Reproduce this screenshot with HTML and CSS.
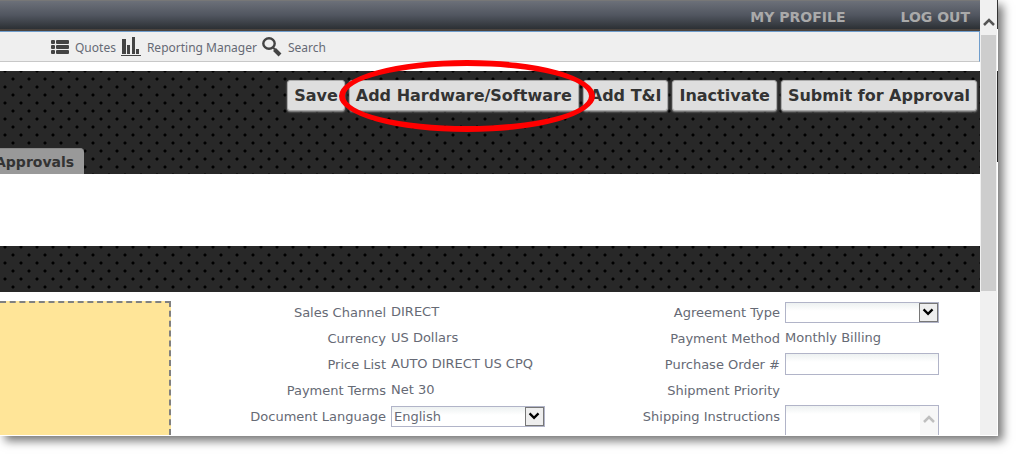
FILE: index.html
```
<!DOCTYPE html>
<html lang="en">
<head>
  <meta charset="utf-8">
  <title>Quote</title>
  <link rel="stylesheet" href="styles.css">
</head>
<body>
<div class="window">
  <div class="page">
    <div class="topbar">
      <a href="#">MY PROFILE</a>
      <a href="#">LOG OUT</a>
    </div>
    <nav class="toolbar">
      <a href="#">
        <svg width="18" height="14" viewBox="0 0 18 14" fill="#444">
          <rect x="0" y="0" width="4" height="4" rx="1"/><rect x="5" y="0" width="13" height="4" rx="1"/>
          <rect x="0" y="5" width="4" height="4" rx="1"/><rect x="5" y="5" width="13" height="4" rx="1"/>
          <rect x="0" y="10" width="4" height="4" rx="1"/><rect x="5" y="10" width="13" height="4" rx="1"/>
        </svg>
        <span>Quotes</span>
      </a>
      <a href="#">
        <svg width="20" height="20" viewBox="0 0 20 20" fill="#444">
          <rect x="1" y="2" width="4" height="15"/><rect x="6" y="8" width="3" height="9"/>
          <rect x="11" y="0" width="3" height="17"/><rect x="15" y="12" width="3" height="5"/>
          <rect x="0" y="18" width="20" height="1"/>
        </svg>
        <span>Reporting Manager</span>
      </a>
      <a href="#">
        <svg width="20" height="20" viewBox="0 0 20 20" fill="none" stroke="#444">
          <ellipse cx="7" cy="6.5" rx="5.7" ry="5.2" stroke-width="2.4"/>
          <path d="M11 10.500l2 2" stroke-width="2"/>
          <path d="M12.500 12.500l5.500 5.500" stroke-width="4"/>
        </svg>
        <span>Search</span>
      </a>
    </nav>
    <div class="band band-actions">
      <div class="actions">
        <button>Save</button>
        <div class="marked">
          <button>Add Hardware/Software</button>
          <div class="ring"></div>
        </div>
        <button>Add T&amp;I</button>
        <button>Inactivate</button>
        <button>Submit for Approval</button>
      </div>
      <a class="tab" href="#">Approvals</a>
    </div>
    <div class="band band-section"></div>
    <main class="details">
      <div class="note"></div>
      <div class="fields">
        <span class="name">Sales Channel</span><span class="value">DIRECT</span>
        <span class="name">Currency</span><span class="value">US Dollars</span>
        <span class="name">Price List</span><span class="value">AUTO DIRECT US CPQ</span>
        <span class="name">Payment Terms</span><span class="value">Net 30</span>
        <label class="name" for="language">Document Language</label>
        <div class="select">
          <select id="language"><option>English</option></select>
          <svg width="19" height="19" viewBox="0 0 19 19"><path d="M4 6l5 5 5-5" fill="none" stroke="#000" stroke-width="2.500"/></svg>
        </div>
      </div>
      <div class="fields">
        <label class="name" for="agreement">Agreement Type</label>
        <div class="select">
          <select id="agreement"><option></option></select>
          <svg width="19" height="19" viewBox="0 0 19 19"><path d="M4 6l5 5 5-5" fill="none" stroke="#000" stroke-width="2.500"/></svg>
        </div>
        <span class="name">Payment Method</span><span class="value">Monthly Billing</span>
        <label class="name" for="po">Purchase Order #</label>
        <input id="po" type="text">
        <span class="name">Shipment Priority</span><span class="value"></span>
        <label class="name" for="shipping">Shipping Instructions</label>
        <div class="memo">
          <textarea id="shipping"></textarea>
          <div class="memo-scroll">
            <svg width="12" height="10" viewBox="0 0 12 10"><path d="M1 8l5-5 5 5" fill="none" stroke="#bfbfbf" stroke-width="2.500"/></svg>
          </div>
        </div>
      </div>
    </main>
  </div>
  <div class="scrollbar">
    <button class="scroll-up" aria-label="Scroll up">
      <svg width="12" height="10" viewBox="0 0 12 10"><path d="M1 8l5-5 5 5" fill="none" stroke="#555" stroke-width="2.500"/></svg>
    </button>
    <div class="thumb"></div>
  </div>
</div>
</body>
</html>
```
FILE: styles.css
```
* {
  box-sizing: border-box;
}
body {
  margin: 0;
  height: 100vh;
  padding: 0 19px 19px 0;
  overflow: hidden;
  background: #fff;
  color: #666a75;
  font: 13px/16px Verdana, "DejaVu Sans", sans-serif;
}
a {
  color: inherit;
  text-decoration: none;
}
svg {
  display: block;
  flex: none;
}

.window {
  display: flex;
  height: 100%;
  padding-right: 1px;
  padding-bottom: 1px;
  background: linear-gradient(#333 29px, #fff 29px, #fff 71px, #282828 71px, #282828 162px, #fff 162px);
  box-shadow: 5px 5px 9px 0 #777;
}
.page {
  flex: 1;
  display: flex;
  flex-direction: column;
  min-width: 0;
  background: #fff;
}

.topbar {
  display: flex;
  flex: none;
  justify-content: flex-end;
  align-items: center;
  gap: 55px;
  height: 31px;
  padding: 4px 10px 0 0;
  border-top: 1px solid #777;
  border-bottom: 2px solid #4b443f;
  background: linear-gradient(#6c7079, #515660 50%, #2c3034);
  color: #aaa;
  font-size: 14px;
  font-weight: bold;
}

.toolbar {
  display: flex;
  flex: none;
  align-items: center;
  gap: 5px;
  height: 31px;
  margin-bottom: 9px;
  padding-left: 51px;
  border-top: 1px solid #6f9dcc;
  border-right: 1px solid #6f9dcc;
  border-bottom: 1px solid #c8c8c8;
  background: #efefef;
  font-family: "Noto Sans", sans-serif;
  font-size: 12px;
}
.toolbar a {
  display: flex;
  align-items: center;
  gap: 6px;
}
.toolbar span {
  padding-top: 3px;
}

/* dark perforated strip, two dots per 16px tile */
.band {
  flex: none;
  background-color: #282828;
  background-image:
    radial-gradient(circle at 5px 8px, #000 1px, transparent 2px),
    radial-gradient(circle at 13px 8px, #000 1px, transparent 2px);
  background-size: 16px 16px;
  background-position: 0 -8px, 0 0;
}
.band-actions {
  display: flex;
  flex-direction: column;
  justify-content: space-between;
  align-items: flex-start;
  height: 103px;
  padding-top: 9px;
}
.band-section {
  height: 46px;
  margin-top: 72px;
  background-position: 0 -7px, 0 1px;
}

.actions {
  display: flex;
  align-self: flex-end;
  gap: 4px;
  padding-right: 3px;
}
.actions button {
  height: 31px;
  padding: 0 6px;
  border: 1px solid #aaa;
  border-radius: 3px;
  background: #dedede;
  box-shadow: 0 1px 2px #999;
  color: #333;
  font: bold 16px Verdana, "DejaVu Sans", sans-serif;
  white-space: nowrap;
}
.marked {
  position: relative;
}
.ring {
  position: absolute;
  z-index: 1;
  inset: -20px -16px -21px -10px;
  border: 6px solid #f00;
  border-radius: 50%;
  pointer-events: none;
}

.tab {
  margin-left: -15px;
  padding: 5px 10px;
  height: 26px;
  border-top: 1px solid #888;
  border-radius: 0 4px 0 0;
  background: #999;
  color: #333;
  font-size: 14px;
  font-weight: bold;
}

.details {
  display: grid;
  grid-template-columns: 171px 1fr 394px;
  grid-template-rows: 1fr;
  flex: 1;
  min-height: 0;
  overflow: hidden;
}
.note {
  margin-top: 9px;
  border: 2px dashed #808080;
  border-width: 2px 2px 0 0;
  background: #ffe598;
}
.fields {
  display: grid;
  grid-template-columns: 1fr 154px;
  grid-auto-rows: 26px;
  align-items: center;
  column-gap: 5px;
  padding: 7px 41px 0 0;
}
.name {
  padding-top: 2px;
  text-align: right;
}
.value {
  white-space: nowrap;
}

.select,
.memo {
  position: relative;
}
select,
input,
textarea {
  display: block;
  width: 100%;
  border: 1px solid #b1b4c8;
  border-radius: 0;
  outline: 0;
  background: linear-gradient(#edf1f1, #fff 8px);
  color: inherit;
  font: inherit;
}
select {
  appearance: none;
  height: 21px;
  padding: 1px 20px 0 2px;
}
input {
  height: 22px;
}
.select svg {
  position: absolute;
  top: 1px;
  right: 1px;
  border: 1px solid #777;
  background: #eee;
  pointer-events: none;
}
.memo {
  align-self: start;
  margin-top: 2px;
}
textarea {
  height: 60px;
  resize: none;
}
.memo-scroll {
  position: absolute;
  top: 1px;
  right: 1px;
  bottom: 1px;
  width: 18px;
  padding: 8px 3px;
  background: #f7f7f7;
}

.scrollbar {
  flex: none;
  width: 17px;
  padding: 1px 1px 0;
  background: #f0f0f0;
}
.scroll-up {
  display: flex;
  justify-content: center;
  align-items: center;
  width: 100%;
  height: 34px;
  padding: 8px 0 0;
  border: 0;
  background: none;
}
.thumb {
  height: 59%;
  background: #cdcdcd;
}
```
